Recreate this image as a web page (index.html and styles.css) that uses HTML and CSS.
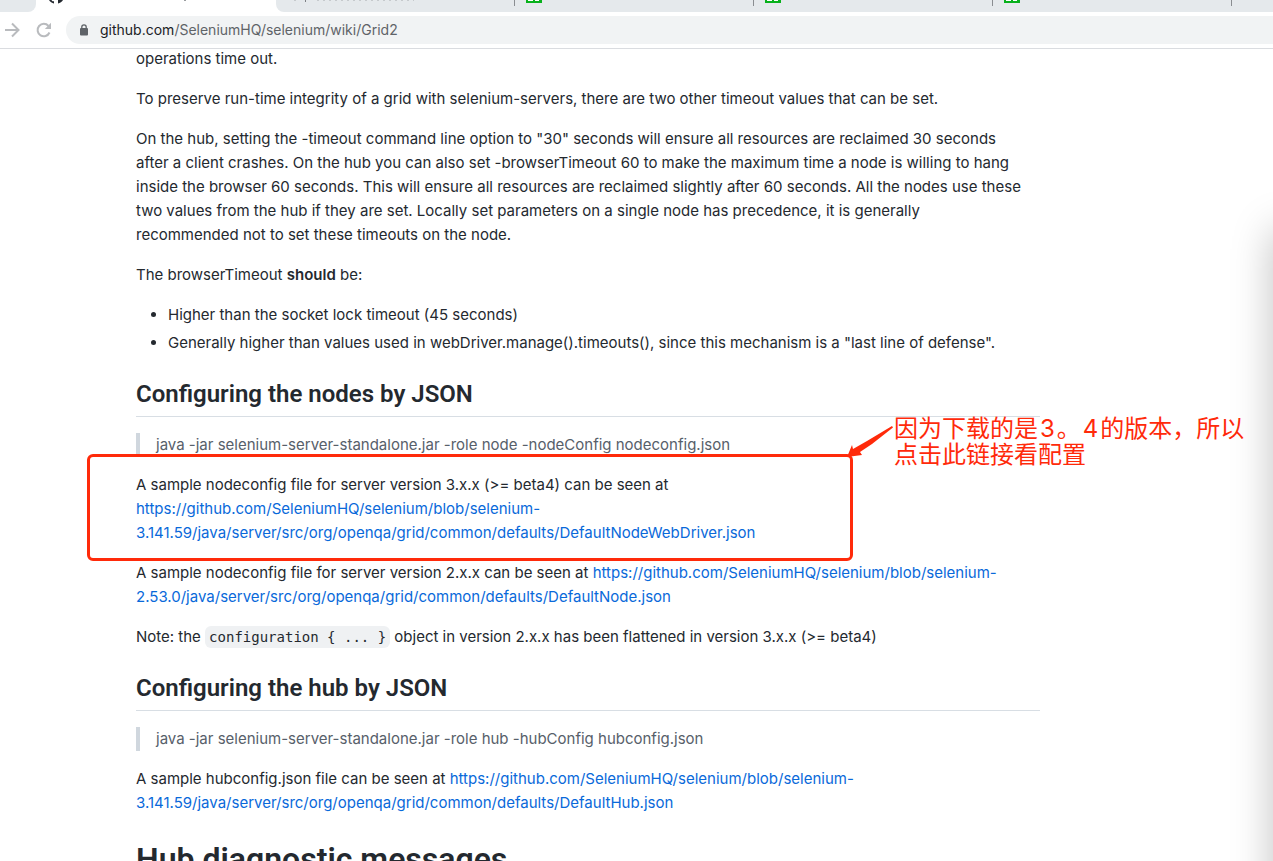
FILE: index.html
```html
<!DOCTYPE html>
<html lang="en">
<head>
<meta charset="utf-8">
<title>Grid2 · SeleniumHQ/selenium Wiki</title>
<link rel="stylesheet" href="styles.css">
</head>
<body>
<div class="window">
  <header class="browser">
    <div class="tabs">
      <div class="tab tab-before"></div>
      <div class="tab tab-active">
        <svg class="octocat" width="16" height="4" viewBox="0 0 16 4"><path d="M1 0C2 2 4 3 6 3.4V1.2C4.500 1.500 4 .8 3.500 0ZM10 0V3.400C12 3 14 2 15 0Z" fill="#24292f"/></svg>
        <i class="speck"></i>
      </div>
      <div class="tab tab-next">
        <svg width="130" height="3" viewBox="0 0 130 3"><path d="M4 .5H10M27 .5H124" stroke="#c6cacd" stroke-dasharray="2 4"/><path d="M15.500 0V2" stroke="#7d8084"/></svg>
      </div>
      <div class="tab tab-green"><svg width="16" height="3" viewBox="0 0 16 3"><path d="M0 0H16V3H0Z" fill="#08b11c"/><path d="M2 0H7V1H2ZM9 0H13V1H9Z" fill="#fff"/></svg></div>
      <div class="tab tab-green"><svg width="16" height="3" viewBox="0 0 16 3"><path d="M0 0H16V3H0Z" fill="#08b11c"/><path d="M2 0H7V1H2ZM9 0H13V1H9Z" fill="#fff"/></svg></div>
      <div class="tab tab-green"><svg width="16" height="3" viewBox="0 0 16 3"><path d="M0 0H16V3H0Z" fill="#08b11c"/><path d="M2 0H7V1H2ZM9 0H13V1H9Z" fill="#fff"/></svg></div>
      <div class="tab tab-last"></div>
    </div>
    <div class="toolbar">
      <button class="nav" aria-label="Forward"><svg width="16" height="16" viewBox="0 0 16 16" fill="none" stroke="#b9bbbe" stroke-width="2"><path d="M1 8H14M8 1.500L14.500 8L8 14.500"/></svg></button>
      <button class="nav" aria-label="Reload"><svg width="16" height="16" viewBox="0 0 16 16"><path d="M13.500 10.500A6.200 6.200 0 1 1 12.500 4" fill="none" stroke="#b9bbbe" stroke-width="2"/><path d="M15 .8V7H8.800Z" fill="#b9bbbe"/></svg></button>
      <div class="address">
        <svg width="10" height="12" viewBox="0 0 10 12"><rect x="1" y="4" width="8" height="7.500" rx="1" fill="#5f6368"/><path d="M2.800 5V3A2.200 2.200 0 0 1 7.200 3V5" fill="none" stroke="#5f6368" stroke-width="1.300"/></svg>
        <span class="url"><b>github.com</b>/SeleniumHQ/selenium/wiki/Grid2</span>
      </div>
    </div>
  </header>

  <main class="page">
    <article class="wiki">
      <p>operations time out.</p>
      <p>To preserve run-time integrity of a grid with selenium-servers, there are two other timeout values that can be set.</p>
      <p>On the hub, setting the -timeout command line option to "30" seconds will ensure all resources are reclaimed 30 seconds<br>after a client crashes. On the hub you can also set -browserTimeout 60 to make the maximum time a node is willing to hang<br>inside the browser 60 seconds. This will ensure all resources are reclaimed slightly after 60 seconds. All the nodes use these<br>two values from the hub if they are set. Locally set parameters on a single node has precedence, it is generally<br>recommended not to set these timeouts on the node.</p>
      <p>The browserTimeout <strong>should</strong> be:</p>
      <ul>
        <li>Higher than the socket lock timeout (45 seconds)</li>
        <li>Generally higher than values used in webDriver.manage().timeouts(), since this mechanism is a "last line of defense".</li>
      </ul>
      <h2>Configuring the nodes by JSON</h2>
      <blockquote>java -jar selenium-server-standalone.jar -role node -nodeConfig nodeconfig.json</blockquote>
      <p>A sample nodeconfig file for server version 3.x.x (&gt;= beta4) can be seen at<br><a href="#node3">https://github.com/SeleniumHQ/selenium/blob/selenium-<br>3.141.59/java/server/src/org/openqa/grid/common/defaults/DefaultNodeWebDriver.json</a></p>
      <p>A sample nodeconfig file for server version 2.x.x can be seen at <a href="#node2">https://github.com/SeleniumHQ/selenium/blob/selenium-<br>2.53.0/java/server/src/org/openqa/grid/common/defaults/DefaultNode.json</a></p>
      <p>Note: the <code>configuration { ... }</code> object in version 2.x.x has been flattened in version 3.x.x (&gt;= beta4)</p>
      <h2>Configuring the hub by JSON</h2>
      <blockquote>java -jar selenium-server-standalone.jar -role hub -hubConfig hubconfig.json</blockquote>
      <p>A sample hubconfig.json file can be seen at <a href="#hub3">https://github.com/SeleniumHQ/selenium/blob/selenium-<br>3.141.59/java/server/src/org/openqa/grid/common/defaults/DefaultHub.json</a></p>
      <h1>Hub diagnostic messages</h1>
    </article>
  </main>

  <div class="mark-box"></div>
  <svg class="mark-arrow" width="48" height="34" viewBox="0 0 48 34"><path d="M46 1L21 16L7 24L6 20L1 32L16 30L14 27L26 19L47 2.500Z" fill="#ff2a0a"/></svg>
  <p class="mark-note" lang="zh">因为下载的是<span>3</span>。<span>4</span>的版本，所以<br>点击此链接看配置</p>
  <div class="edge-shadow"></div>
</div>
</body>
</html>
```
FILE: styles.css
```css
* { box-sizing: border-box; }
body {
  margin: 0;
  background: #fff;
  color: #24292f;
  font: 15px/24px Inter, "Noto Sans CJK SC", sans-serif;
}
.window { position: relative; height: 100vh; overflow: hidden; }

.browser { position: relative; z-index: 1; background: #fff; border-bottom: 1px solid #dadce0; }
.tabs { display: flex; height: 12px; background: #fff; }
.tab { position: relative; flex: none; width: 239px; background: #e5e9ec; }
.tab svg { display: block; }
.tab-before { width: 36px; border-bottom-right-radius: 8px; }
.tab-active { width: 240px; background: #fff; padding-left: 12px; display: flex; gap: 120px; }
.speck { width: 2px; height: 1px; background: #9a9da0; }
.tab-next { border-bottom-left-radius: 8px; padding-left: 14px; }
.tab-green { padding-left: 11px; }
.tab-last { flex: 1; }
.tab-green::before, .tab-last::before {
  content: "";
  position: absolute;
  left: -1px;
  top: 0;
  width: 1px;
  height: 6px;
  background: #8a8d91;
}
.toolbar { display: flex; align-items: center; height: 36px; padding-left: 4px; }
.nav { display: flex; width: 16px; height: 16px; padding: 0; border: 0; background: none; margin-right: 16px; }
.address {
  flex: 1;
  display: flex;
  align-items: center;
  gap: 11px;
  height: 28px;
  margin-left: -2px;
  padding-left: 13px;
  border-radius: 14px 0 0 14px;
  background: #f1f3f4;
}
.url { color: #5f6368; font-size: 14px; }
.url b { color: #202124; font-weight: 400; }

.page { padding: 0 16px 0 136px; }
.wiki { max-width: 904px; margin-top: -2px; white-space: nowrap; }
.wiki p, .wiki ul, .wiki blockquote { margin: 0 0 16px; }
.wiki ul { padding-left: 32px; }
.wiki li + li { margin-top: 4px; }
.wiki h1, .wiki h2 { margin: 24px 0 16px; font-family: Roboto, sans-serif; font-weight: 600; }
.wiki h2 {
  padding-bottom: 7px;
  border-bottom: 1px solid #d8dee4;
  font-size: 24px;
  line-height: 30px;
}
.wiki h1 { font-size: 32px; line-height: 40px; }
.wiki strong { font-weight: 600; }
.wiki blockquote { padding-left: 16px; border-left: 4px solid #d0d7de; color: #57606a; }
.wiki a { color: #0969da; text-decoration: none; }
.wiki code {
  padding: 3px 4px;
  border-radius: 6px;
  background: #eff1f3;
  font: 14px/16px "DejaVu Sans Mono", monospace;
}

.mark-box {
  position: absolute;
  left: 87px;
  top: 454px;
  width: 766px;
  height: 107px;
  border: 3px solid #ff2a0a;
  border-radius: 6px;
}
.mark-arrow { position: absolute; left: 846px; top: 425px; }
.mark-note {
  position: absolute;
  left: 894px;
  top: 416px;
  margin: 0;
  color: #ff2a0a;
  font-size: 24px;
  line-height: 26px;
  white-space: nowrap;
}
.mark-note span { padding: 0 2px; }
.edge-shadow {
  position: absolute;
  left: 100%;
  top: 230px;
  width: 40px;
  height: 100vh;
  box-shadow: 0 0 40px rgba(0, 0, 0, 0.25);
}
```
